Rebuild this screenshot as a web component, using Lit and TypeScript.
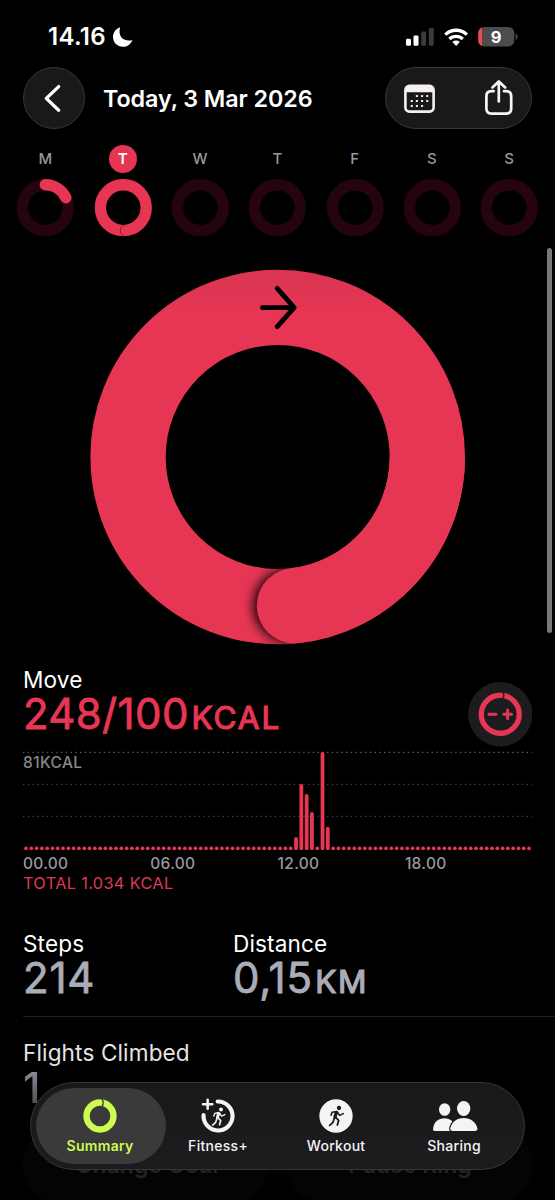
import { LitElement, html, css, svg } from "lit";
import { customElement } from "lit/decorators.js";

const RED = "#e73654";

const runner = (color: string) => svg`
  <g fill="none" stroke=${color} stroke-linecap="round" stroke-linejoin="round">
    <circle cx="9" cy="-24" r="6.4" fill=${color} stroke="none"></circle>
    <path d="M1 -11 L-3 3" stroke-width="10"></path>
    <path d="M4 -12 L11 -2 L22 -7" stroke-width="4.6"></path>
    <path d="M-1 -13 L-12 -11 L-15 -2" stroke-width="4.6"></path>
    <path d="M-1 4 L8 13 L4 27" stroke-width="5.4"></path>
    <path d="M-5 6 L-9 19 L-19 28" stroke-width="5.4"></path>
  </g>`;

@customElement("week-strip")
class WeekStrip extends LitElement {
  static styles = css`
    :host { display: block; font-family: Inter, sans-serif; }
    .week { display: grid; grid-template-columns: repeat(7, 77.3px); margin-left: 6.8px; }
    .day { display: flex; flex-direction: column; align-items: center; gap: 5.5px; }
    .name { width: 28px; height: 28px; line-height: 28px; border-radius: 50%; text-align: center;
      font-size: 15px; font-weight: 500; color: #98989a; }
    .today { background: #e73654; color: #fff; font-weight: 600; }
    svg { display: block; width: 58px; height: 58px; }
  `;
  render() {
    const days = ["M", "T", "W", "T", "F", "S", "S"];
    return html`<div class="week">
      ${days.map((d, i) => html`<div class="day">
        <div class="name ${i === 1 ? "today" : ""}">${d}</div>
        <svg viewBox="-29.3 -28.7 58 58">
          <circle r="22.9" fill="none" stroke=${i === 1 ? RED : "#26040d"} stroke-width="11.4"></circle>
          ${i === 0 ? svg`<path d="M0 -22.9 A22.9 22.9 0 0 1 20.6 -10" fill="none" stroke=${RED} stroke-width="11.4" stroke-linecap="round"></path>` : ""}
          ${i === 1 ? svg`<path d="M1.6 17.4 A5.6 5.6 0 0 0 1.6 28.4" fill="none" stroke="#8f1f35" stroke-width="1"></path>` : ""}
        </svg>
      </div>`)}
    </div>`;
  }
}

@customElement("move-ring")
class MoveRing extends LitElement {
  static styles = css`
    :host { display: block; }
    svg { display: block; width: 380px; height: 380px; margin-left: 87px; }
  `;
  render() {
    return html`<svg viewBox="-190.7 -190 380 380">
      <defs>
        <linearGradient id="top" gradientUnits="userSpaceOnUse" x1="0" y1="-187" x2="0" y2="-140">
          <stop offset="0" stop-color="#d93552"></stop><stop offset="1" stop-color=${RED}></stop>
        </linearGradient>
        <filter id="blur" x="-50%" y="-50%" width="200%" height="200%"><feGaussianBlur stdDeviation="5.5"></feGaussianBlur></filter>
        <clipPath id="band"><path clip-rule="evenodd" d="M0 -187.3 A187.3 187.3 0 1 1 0 187.3 A187.3 187.3 0 1 1 0 -187.3 M0 -112 A112 112 0 1 0 0 112 A112 112 0 1 0 0 -112"></path></clipPath>
      </defs>
      <circle r="149.65" fill="none" stroke="url(#top)" stroke-width="75.3"></circle>
      <g clip-path="url(#band)"><circle cx="12.5" cy="148.7" r="37" fill="#000" opacity="0.95" filter="url(#blur)"></circle></g>
      <path d="M149.65 0 A149.65 149.65 0 0 1 16.7 148.7" fill="none" stroke=${RED} stroke-width="75.3"></path>
      <circle cx="16.7" cy="148.7" r="37.65" fill=${RED}></circle>
      <path d="M-15.3 -149.3 H16 M-0.5 -168.6 L16.5 -149.3 L-0.5 -130.3" fill="none" stroke="#000" stroke-width="4.8" stroke-linecap="round" stroke-linejoin="round"></path>
    </svg>`;
  }
}

@customElement("hour-chart")
class HourChart extends LitElement {
  static styles = css`
    :host { display: block; font-family: Inter, sans-serif; }
    .plot { display: grid; width: 510px; height: 104px; }
    svg, .peak { grid-area: 1 / 1; }
    svg { width: 510px; height: 104px; }
    .peak { font-size: 15.5px; line-height: 16px; margin-top: 7px; font-weight: 500; color: #87878a; letter-spacing: 0.4px; }
    .hours { display: grid; grid-template-columns: repeat(4, 127.3px); color: #98989c; font-size: 15.5px;
      line-height: 18px; margin-top: 2.5px; font-weight: 500; letter-spacing: 0.3px; }
    .total { color: #dd3a55; font-size: 16.3px; line-height: 20px; letter-spacing: 0.35px; }
  `;
  render() {
    const tops: Record<number, number> = { 51: 89, 52: 36, 53: 46, 54: 64, 56: 4, 57: 78.7 };
    return html`
      <div class="plot">
        <svg viewBox="23 748 510 104">
          ${[752.3, 784.4, 816.4].map((y, i) => svg`<line x1="23" x2="532" y1=${y} y2=${y} stroke=${i ? "#414142" : "#5d5d5f"} stroke-width="1.3" stroke-dasharray="1.4 3.35"></line>`)}
          ${Array.from({ length: 96 }, (_, i) => {
            const top = 748 + (tops[i] ?? 98.4);
            return svg`<rect x=${26 + i * 5.295 - 1.9} y=${top} width="3.8" height=${850.2 - top} rx="1.9" fill=${RED}></rect>`;
          })}
        </svg>
        <div class="peak">81KCAL</div>
      </div>
      <div class="hours"><span>00.00</span><span>06.00</span><span>12.00</span><span>18.00</span></div>
      <div class="total">TOTAL 1.034 KCAL</div>`;
  }
}

@customElement("tab-bar")
class TabBar extends LitElement {
  static styles = css`
    :host { display: block; font-family: Inter, sans-serif; }
    .bar { box-sizing: border-box; width: 495px; height: 87.5px; border-radius: 44px; border: 1.3px solid #363638;
      background: linear-gradient(#191919, #1a1a1b 50%, #1c1c1f 70%, #1b1b1d); padding: 0 9.5px; display: grid; grid-template-columns: repeat(4, 118px); }
    .tab { position: relative; display: flex; flex-direction: column; align-items: center; color: #f4f4f6; padding-top: 12.7px; }
    .on { color: #cdfb50; }
    .on::before { content: ""; position: absolute; left: -5px; width: 130px; top: 4.5px; height: 76px; border-radius: 38px; background: #3a3a3b; }
    svg { position: relative; width: 50px; height: 40px; display: block; }
    .label { position: relative; padding-left: 1.2px; font-size: 14px; line-height: 20px; font-weight: 500; letter-spacing: 0.3px; white-space: nowrap; }
    .on .label { font-weight: 600; }
  `;
  render() {
    return html`<div class="bar">
      <div class="tab on">
        <svg viewBox="-75 -60 150 120">
          <circle r="40.5" fill="none" stroke="#cdfb50" stroke-width="19"></circle>
          <path d="M5 -52 Q14 -41 6 -29" fill="none" stroke="#3a3a3b" stroke-width="4"></path>
        </svg><div class="label">Summary</div>
      </div>
      <div class="tab">
        <svg viewBox="-75 -60 150 120">
          <path d="M-1 -43.5 A43.5 43.5 0 1 1 -43.3 -3" fill="none" stroke="#f4f4f6" stroke-width="12.5" stroke-linecap="round"></path>
          <path d="M-31 -49 V-22 M-45 -35.5 H-17" stroke="#f4f4f6" stroke-width="7.5" stroke-linecap="round"></path>
          <g transform="translate(1 2) scale(.9)">${runner("#f4f4f6")}</g>
        </svg><div class="label">Fitness+</div>
      </div>
      <div class="tab">
        <svg viewBox="-75 -60 150 120">
          <circle r="50" fill="#f4f4f6"></circle>${runner("#1a1a1b")}
        </svg><div class="label">Workout</div>
      </div>
      <div class="tab">
        <svg viewBox="-75 -60 150 120">
          <g fill="#f4f4f6" transform="translate(-3 0)">
            <ellipse cx="-25" cy="-19.5" rx="17" ry="19"></ellipse>
            <path d="M-55 45 Q-61 45 -60 38 C-57 17 -43 7 -26 7 C-8 7 4 17 7 38 L7 45 Z"></path>
            <path d="M0 45 Q-9 45 -8 37 C-4 18 12 6 32 6 C52 6 69 18 73 37 Q74 45 66 45 Z" stroke="#1a1a1b" stroke-width="7" paint-order="stroke"></path>
            <ellipse cx="32" cy="-22.5" rx="20" ry="22.5"></ellipse>
          </g>
        </svg><div class="label">Sharing</div>
      </div>
    </div>`;
  }
}

@customElement("app-root")
class AppRoot extends LitElement {
  static styles = css`
    :host { display: block; position: relative; width: 555px; height: 1200px; overflow: hidden; background: #000;
      color: #fff; font-family: Inter, sans-serif; }
    svg { display: block; }
    .status { height: 67px; display: flex; align-items: flex-start; justify-content: space-between; padding: 0 37px 0 48px; box-sizing: border-box; }
    .clock { display: flex; padding-top: 25px; font-size: 24px; line-height: 24px; font-weight: 600; letter-spacing: 0.3px; }
    .clock span { width: 64px; }
    .signals { padding-top: 25px; }
    .header { display: flex; align-items: center; padding: 0 23px; height: 62px; }
    .glass { box-sizing: border-box; height: 62px; border: 1.3px solid #363637; background: #191919; border-radius: 31px; }
    .back { width: 62px; }
    .title { flex: 1; margin-left: 18px; padding-top: 1px; font-size: 23.3px; font-weight: 600; letter-spacing: -0.08px; white-space: nowrap; }
    .tools { width: 147px; }
    week-strip { margin-top: 16px; }
    move-ring { margin-top: 30.5px; }
    .move { display: flex; justify-content: space-between; margin: 20px 23px 0; height: 81px; }
    .caption { font-size: 22.6px; line-height: 26px; letter-spacing: 0.12px; white-space: nowrap; }
    .value { font-size: 42px; line-height: 44px; font-weight: 400; white-space: nowrap; stroke-linejoin: round; -webkit-text-stroke: 0.8px currentColor; }
    .unit { font-size: 31.5px; letter-spacing: 1.9px; margin-left: 2.8px; -webkit-text-stroke: 1.2px currentColor; }
    .red { color: #e73654; letter-spacing: 0.35px; }
    .gray { color: #aaadb8; letter-spacing: 0.8px; }
    .gray .unit { letter-spacing: 1.6px; margin-left: 2.5px; }
    .move .value { margin-top: -1px; }
    .adjust { width: 64.5px; height: 64.5px; margin-top: 15px; }
    hour-chart { margin: 0 0 0 23px; }
    .stats { display: grid; grid-template-columns: 210px 1fr; margin: 38.5px 0 0 23px; height: 85px; border-bottom: 1px solid #1f1f21; }
    .stats .value { margin-top: -1px; }
    .flights { margin: 23px 0 0 23px; height: 75px; }
    .flights .caption { color: #e4e4e4; }
    .fade { background: linear-gradient(#85878f 15%, #4f5157 85%); -webkit-background-clip: text; background-clip: text; color: transparent; -webkit-text-stroke: 0; font-weight: 500; width: 40px; }
    .actions { display: flex; gap: 19px; margin: 12px 0 0 22px; }
    .action { box-sizing: border-box; width: 246px; height: 76px; line-height: 77px; border-radius: 38px; background: #040404; color: #232324; text-align: center;
      font-size: 23px; font-weight: 600; flex: none; }
    .action:first-child { padding-left: 4px; }
    .scroll { position: absolute; right: 3.5px; top: 248px; width: 4.5px; height: 385px; border-radius: 3px; background: #78787a; }
    tab-bar { position: absolute; left: 30px; top: 1082px; }
  `;
  render() {
    return html`
      <div class="status">
        <div class="clock"><span>14.16</span>
          <svg width="22" height="24" viewBox="112 25 22 24"><path d="M120.2 27.2 C117.5 36 123 42.2 132.5 40.2 C130.5 44.5 127 46.8 123 46.8 C117.2 46.8 113 42.5 113 36.8 C113 32.3 115.9 28.7 120.2 27.2 Z" fill="#fff"></path></svg>
        </div>
        <svg class="signals" width="112" height="24" viewBox="406 25 112 24">
          <g fill="#fff"><rect x="406" y="38.8" width="5" height="7" rx="1.4"></rect><rect x="413.5" y="35.4" width="5" height="10.4" rx="1.4"></rect></g>
          <g fill="#3b3b3d"><rect x="421.2" y="31.6" width="4.9" height="14.2" rx="1.4"></rect><rect x="428.8" y="28" width="4.9" height="17.8" rx="1.4"></rect></g>
          <g fill="none" stroke="#fff" stroke-width="3.3">
            <path d="M445.3 34.6 A15.6 15.6 0 0 1 466.9 34.6"></path><path d="M449.4 39 A9.6 9.6 0 0 1 462.8 39"></path>
          </g>
          <path d="M452.4 41.9 A5.4 5.4 0 0 1 459.8 41.9 L456.1 45.9 Z" fill="#fff"></path>
          <clipPath id="cell"><rect x="478.3" y="27" width="36" height="19.5" rx="6"></rect></clipPath>
          <rect x="478.3" y="27" width="36" height="19.5" rx="6" fill="#4c4c4e"></rect>
          <rect x="478" y="27" width="4" height="19.5" fill="#ef4a52" clip-path="url(#cell)"></rect>
          <path d="M515.6 33.6 Q517.6 34.5 517.6 36.8 Q517.6 39.1 515.6 40 Z" fill="#4c4c4e"></path>
          <text x="496.2" y="42.8" text-anchor="middle" font-family="Inter" font-size="16.5" font-weight="700" fill="#fff">9</text>
        </svg>
      </div>
      <div class="header">
        <div class="glass back"><svg width="60" height="60" viewBox="24 68.2 60 60"><path d="M58.7 86.8 L46.3 98.6 L58.7 110.4" fill="none" stroke="#fff" stroke-width="3.3" stroke-linecap="round" stroke-linejoin="round"></path></svg></div>
        <div class="title">Today, 3 Mar 2026</div>
        <div class="glass tools"><svg width="145" height="60" viewBox="386 68 145 60">
          <rect x="405.4" y="85.9" width="28.2" height="25.7" rx="4" fill="none" stroke="#f6f0f4" stroke-width="2.6"></rect>
          <path d="M405 92.3 V89.5 Q405 85.6 409 85.6 H430 Q434 85.6 434 89.5 V92.3 Z" fill="#f6f0f4"></path>
          <g fill="#f6f0f4">${[[1, 0], [2, 0], [3, 0], [0, 1], [1, 1], [2, 1], [3, 1], [0, 2], [1, 2], [2, 2]].map(([c, r]) => svg`<rect x=${410.7 + c * 5.15} y=${95 + r * 4.95} width="2.1" height="2.1" rx=".4"></rect>`)}</g>
          <g fill="none" stroke="#f6f6f6" stroke-width="2.7" stroke-linecap="round" stroke-linejoin="round">
            <path d="M493.6 91.2 H491.4 Q486.4 91.2 486.4 96.2 V108.6 Q486.4 113.6 491.4 113.6 H506.2 Q511.2 113.6 511.2 108.6 V96.2 Q511.2 91.2 506.2 91.2 H504"></path>
            <path d="M498.8 101.5 V81.8 M492.4 87.4 L498.8 81.4 L505.2 87.4"></path>
          </g>
        </svg></div>
      </div>
      <week-strip></week-strip>
      <move-ring></move-ring>
      <div class="move">
        <div><div class="caption">Move</div><div class="value red">248/100<span class="unit">KCAL</span></div></div>
        <svg class="adjust" viewBox="-32.25 -32.25 64.5 64.5">
          <circle r="32.2" fill="#1c1c1e"></circle>
          <circle r="19" fill="none" stroke=${RED} stroke-width="5.3"></circle>
          <path d="M2.2 -22.5 Q5 -19 2.2 -15.4" fill="none" stroke="#1c1c1e" stroke-width="1.4"></path>
          <path d="M-11.3 0 H-4.3 M3.5 0 H11.3 M7.4 -4.3 V4.3" stroke=${RED} stroke-width="3" stroke-linecap="round"></path>
        </svg>
      </div>
      <hour-chart></hour-chart>
      <div class="stats">
        <div><div class="caption">Steps</div><div class="value gray">214</div></div>
        <div><div class="caption">Distance</div><div class="value gray">0,15<span class="unit">KM</span></div></div>
      </div>
      <div class="flights"><div class="caption">Flights Climbed</div><div class="value fade">1</div></div>
      <div class="actions"><div class="action">Change Goal</div><div class="action">Pause Ring</div></div>
      <div class="scroll"></div>
      <tab-bar></tab-bar>`;
  }
}
